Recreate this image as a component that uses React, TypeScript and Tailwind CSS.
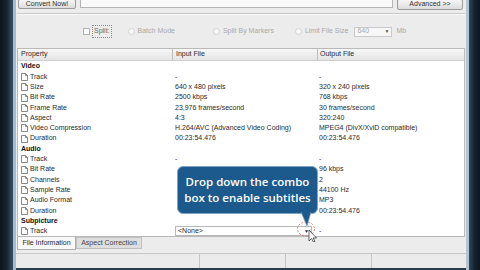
import React from 'react';

type Row = { label: string; input: string; output: string; group?: boolean; combo?: boolean };

const rows: Row[] = [
  { label: 'Video', input: '', output: '', group: true },
  { label: 'Track', input: '-', output: '-' },
  { label: 'Size', input: '640 x 480 pixels', output: '320 x 240 pixels' },
  { label: 'Bit Rate', input: '2500 kbps', output: '768 kbps' },
  { label: 'Frame Rate', input: '23,976 frames/second', output: '30 frames/second' },
  { label: 'Aspect', input: '4:3', output: '320:240' },
  { label: 'Video Compression', input: 'H.264/AVC (Advanced Video Coding)', output: 'MPEG4 (DivX/XviD compatible)' },
  { label: 'Duration', input: '00:23:54.476', output: '00:23:54.476' },
  { label: 'Audio', input: '', output: '', group: true },
  { label: 'Track', input: '-', output: '-' },
  { label: 'Bit Rate', input: '', output: '96 kbps' },
  { label: 'Channels', input: '', output: '2' },
  { label: 'Sample Rate', input: '', output: '44100 Hz' },
  { label: 'Audio Format', input: '', output: 'MP3' },
  { label: 'Duration', input: '', output: '00:23:54.476' },
  { label: 'Subpicture', input: '', output: '', group: true },
  { label: 'Track', input: '<None>', output: '-', combo: true },
];

const PageIcon: React.FC = () => (
  <svg width="7" height="8" viewBox="0 0 7 8" className="shrink-0">
    <path d="M0.5 0.5 H4.5 L6.5 2.5 V7.5 H0.5 Z" fill="#fff" stroke="#6b6b6b" strokeWidth="0.8" />
    <path d="M4.5 0.5 V2.5 H6.5" fill="none" stroke="#6b6b6b" strokeWidth="0.8" />
  </svg>
);

const Radio: React.FC<{ label: string }> = ({ label }) => (
  <div className="flex items-center gap-[3px] text-[#a9a9a9]">
    <div className="w-[7px] h-[7px] rounded-full border border-[#d4d4d4] bg-[#f7f7f7]" />
    <span>{label}</span>
  </div>
);

export default function App() {
  return (
    <div
      className="relative w-[480px] h-[270px] overflow-hidden flex bg-[#0f1a23] text-[#2a2a2a]"
      style={{ fontFamily: '"Liberation Sans", Arial, sans-serif' }}
    >
      {/* left frame */}
      <div className="w-[13px] bg-gradient-to-r from-[#0b141b] via-[#15232e] to-[#36546a]" />
      <div className="w-[3px] bg-[#a9bccb]" />

      {/* window body */}
      <div className="w-[450px] flex flex-col bg-[#ececec] text-[7px]">
        {/* top bar */}
        <div className="flex items-start gap-[4px] h-[13px] pl-[2px] pr-[3px]">
          <div className="w-[58px] h-[10px] -mt-[1px] flex items-center justify-center border border-[#9a9a9a] rounded-[2px] bg-gradient-to-b from-[#f6f6f6] to-[#dcdcdc] text-[#333]">
            Convert Now!
          </div>
          <div className="flex-1 h-[9px] -mt-[1px] border border-[#b5b5b5] bg-[#f9f9f9]" />
          <div className="w-[66px] h-[11px] -mt-[1px] flex items-center justify-center border border-[#9a9a9a] rounded-[2px] bg-gradient-to-b from-[#f6f6f6] to-[#dcdcdc] text-[#333]">
            Advanced &gt;&gt;
          </div>
        </div>
        <div className="h-[2px] border-t border-[#c8c8c8] bg-[#fafafa] mx-[1px]" />

        {/* options row */}
        <div className="h-[33px] flex items-center pl-[67px]">
          <div className="flex items-center gap-[2px]">
            <div className="w-[7px] h-[7px] border border-[#b0b0b0] bg-white" />
            <span className="border border-dotted border-[#888] px-[1px] text-[#6a6a6a]">Split:</span>
          </div>
          <div className="ml-[16px]"><Radio label="Batch Mode" /></div>
          <div className="ml-[38px]"><Radio label="Split By Markers" /></div>
          <div className="ml-[21px]"><Radio label="Limit File Size" /></div>
          <div className="ml-[6px] w-[38px] h-[10px] border border-[#c9c9c9] bg-[#f7f7f7] flex items-center justify-between px-[2px] text-[#a9a9a9]">
            <span>640</span>
            <span className="text-[5px] text-[#555]">▼</span>
          </div>
          <span className="ml-[4px] text-[#a9a9a9]">Mb</span>
        </div>

        {/* table */}
        <div className="mx-[1px] h-[189px] flex flex-col border border-[#b9b9b9] bg-white">
          <div className="h-[12px] flex items-center bg-gradient-to-b from-[#f7f7f7] to-[#e4e4e4] border-b border-[#d0d0d0]">
            <div className="w-[154px] pl-[3px]">Property</div>
            <div className="w-[145px] pl-[3px] border-l border-[#bdbdbd]">Input File</div>
            <div className="flex-1 pl-[2px] border-l border-[#bdbdbd]">Output File</div>
          </div>
          <div className="flex flex-col pt-[1px]">
            {rows.map((r, i) => (
              <div key={i} className="h-[10.3px] flex items-center">
                <div className="w-[154px] pl-[3px] flex items-center gap-[2px]">
                  {r.group ? (
                    <span className="font-bold text-[#111]">{r.label}</span>
                  ) : (
                    <>
                      <PageIcon />
                      <span>{r.label}</span>
                    </>
                  )}
                </div>
                <div className="w-[145px] pl-[3px]">
                  {r.combo ? (
                    <div className="h-[10px] w-[137px] border border-[#b8b8b8] bg-white flex items-center justify-between pl-[2px] pr-[2px]">
                      <span>{r.input}</span>
                      <span className="text-[5px]">▼</span>
                    </div>
                  ) : (
                    r.input
                  )}
                </div>
                <div className="flex-1 pl-[2px]">{r.output}</div>
              </div>
            ))}
          </div>
        </div>

        {/* tabs */}
        <div className="h-[14px] flex pl-[1px]">
          <div className="w-[59px] h-[13px] flex items-center justify-center border border-t-0 border-[#b0b0b0] bg-[#f8f8f8]">
            File Information
          </div>
          <div className="w-[66px] h-[12px] flex items-center justify-center border border-[#c0c0c0] bg-[#dedede] text-[#444]">
            Aspect Correction
          </div>
        </div>

        {/* status bar */}
        <div className="mt-[2px] flex-1 flex border-t border-[#c8c8c8] bg-[#ebebeb]">
          <div className="w-[184px] border-r border-[#c6c6c6]" />
          <div className="w-[86px] border-r border-[#c6c6c6]" />
          <div className="w-[86px] border-r border-[#c6c6c6]" />
          <div className="flex-1" />
        </div>
        <div className="h-[2px] bg-[#2b3b47]" />
      </div>

      {/* right frame */}
      <div className="w-[3px] bg-[#b3c3cf]" />
      <div className="flex-1 bg-gradient-to-r from-[#2e4a5e] via-[#142330] to-[#0d1820]" />

      {/* tooltip */}
      <div className="absolute left-[177px] top-[166px] w-[141px] h-[48px] rounded-[6px] bg-[#1c5a8d] border border-[#7fa3c2] flex flex-col items-center justify-center text-white text-[11.5px] leading-[16px] font-semibold"
        style={{ fontFamily: '"Open Sans", "Liberation Sans", sans-serif' }}>
        <span>Drop down the combo</span>
        <span>box to enable subtitles</span>
      </div>
      <svg className="absolute left-[296px] top-[212px]" width="24" height="30" viewBox="0 0 24 30">
        <ellipse cx="10" cy="17" rx="8.5" ry="7" fill="none" stroke="#d66" strokeWidth="0.8" strokeDasharray="2 1.5" />
        <path d="M5 0 L15 0 L11 14 Z" fill="#1c5a8d" />
        <path d="M5 0 L11 14 L15 0" fill="none" stroke="#7fa3c2" strokeWidth="0.8" />
        <path d="M13 18 L13 29 L15.5 26.5 L17.5 30 L19 29.3 L17 26 L20.5 26 Z" fill="#fff" stroke="#222" strokeWidth="0.7" />
      </svg>
    </div>
  );
}
